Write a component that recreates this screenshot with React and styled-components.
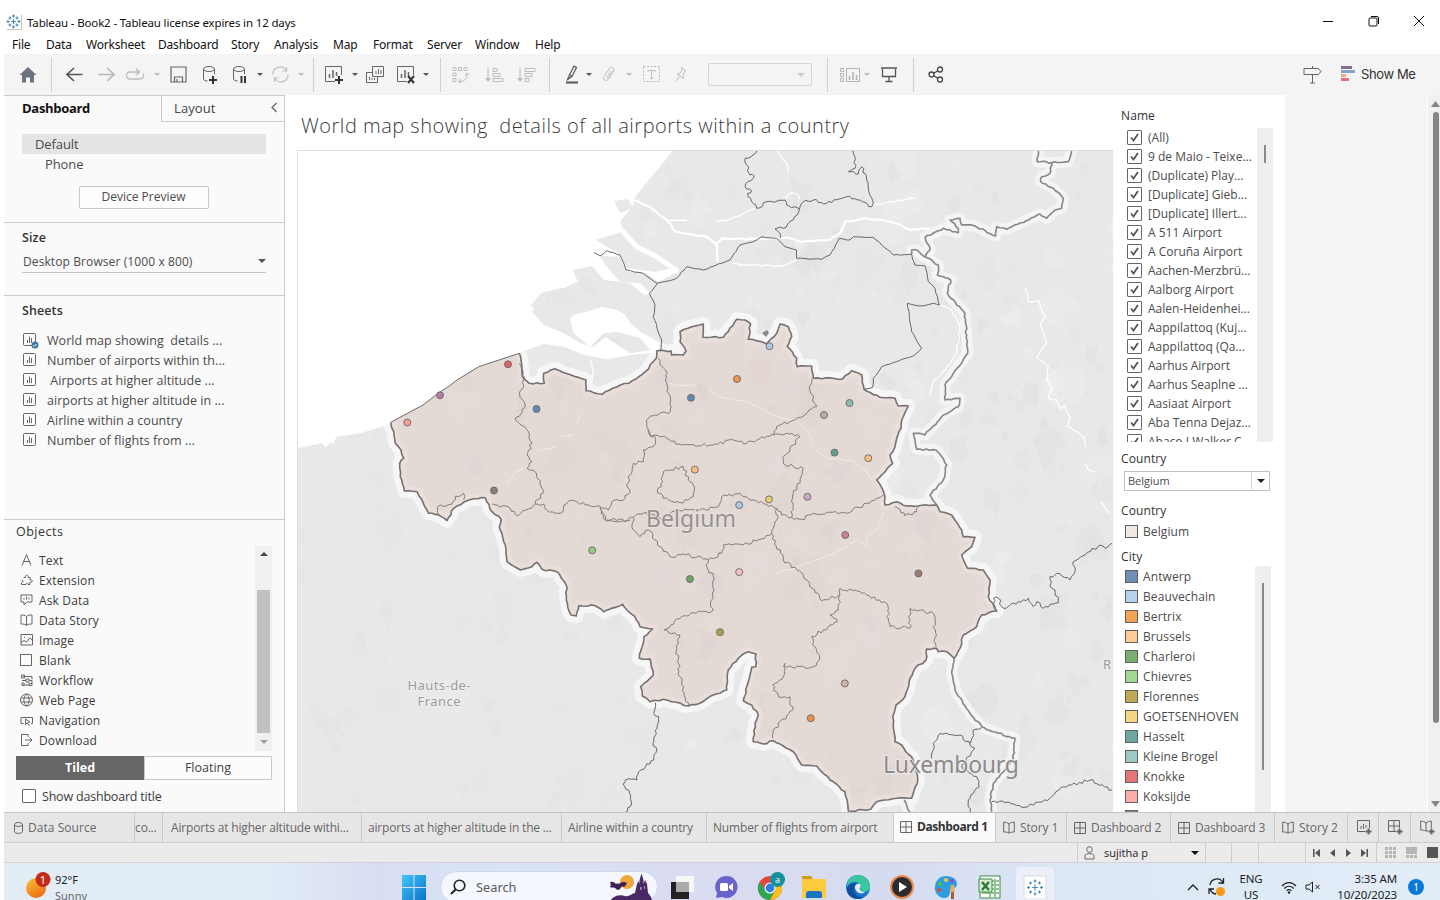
import React from "react";
import styled, { createGlobalStyle } from "styled-components";

const UI = `"Open Sans", "Noto Sans", sans-serif`;
const WIN = `"Noto Sans", "Open Sans", sans-serif`;

const GlobalStyle = createGlobalStyle`
  * { box-sizing: border-box; }
  body { margin: 0; background: #fff; font-family: ${UI}; font-size: 12px; color: #4b4b4b; overflow: hidden; }
`;

/* ---------- window frame ---------- */
const Window = styled.div`
  width: 1440px; height: 900px; padding-left: 4px; overflow: hidden;
  display: flex; flex-direction: column; background: #fff;
`;
const TitleBar = styled.header`
  flex: none; height: 34px; padding: 10px 15px 0 2px; display: flex; align-items: center;
  font-family: ${WIN}; font-size: 11.5px; color: #111;
`;
const TitleText = styled.span`margin-left: 5px; letter-spacing: -0.15px; flex: 1; white-space: pre;`;
const WindowButtons = styled.div`display: flex; gap: 33.5px; align-items: center; margin-top: -3px;`;
const MenuBar = styled.nav`
  flex: none; height: 20px; padding-left: 8px; display: flex; align-items: center;
  font-family: ${WIN}; font-size: 12px; color: #111;
`;
const MenuItem = styled.span`width: ${(p) => p.$w}px; flex: none; letter-spacing: -0.2px; white-space: nowrap;`;

/* ---------- toolbar ---------- */
const Toolbar = styled.div`flex: none; height: 41px; background: #f4f4f4; display: flex; align-items: center;`;
const Slot = styled.div`
  width: ${(p) => p.$w}px; height: 34px; flex: none; display: flex; align-items: center; justify-content: center;
  border-right: ${(p) => (p.$line ? "1px solid #cfcfcf" : "none")};
  svg { flex: none; }
`;
const Caret = styled.i`
  width: 0; height: 0; flex: none; border: ${(p) => p.$s || 3}px solid transparent; border-bottom: 0;
  border-top: ${(p) => p.$s || 3}px solid ${(p) => p.$c || "#555"};
`;
const Combo = styled.div`
  width: 104px; height: 23px; flex: none; border: 1px solid #d4d4d4; border-radius: 2px;
  display: flex; align-items: center; justify-content: flex-end; padding-right: 6px;
`;
const ShowMe = styled.div`
  display: flex; align-items: center; gap: 6px; width: 108px; height: 32px; padding: 0 0 2px 9px; font-size: 13px; color: #333;
  font-family: Inter, sans-serif; font-weight: 400; letter-spacing: -0.4px; white-space: nowrap;
`;

/* ---------- workspace ---------- */
const Workspace = styled.div`flex: none; height: 717px; display: flex;`;
const Sidebar = styled.aside`
  width: 281px; flex: none; border-right: 1px solid #cbcbcb; border-top: 1px solid #cbcbcb; background: #fafafa;
  display: flex; flex-direction: column; font-size: 13px;
`;
const PaneTabs = styled.div`height: 26px; display: flex; flex: none;`;
const PaneTab = styled.div`
  width: ${(p) => (p.$active ? 157 : 124)}px; flex: none; display: flex; align-items: center; justify-content: space-between;
  padding: 0 7px 2px ${(p) => (p.$active ? 18 : 12)}px; color: ${(p) => (p.$active ? "#111" : "#444")};
  font-weight: ${(p) => (p.$active ? 700 : 400)}; font-size: 13px; letter-spacing: ${(p) => (p.$active ? "-0.3px" : "0.1px")};
  border-left: ${(p) => (p.$active ? 0 : 1)}px solid #cbcbcb; border-bottom: ${(p) => (p.$active ? 0 : 1)}px solid #cbcbcb;
`;
const Section = styled.section`
  height: ${(p) => p.$h}px; flex: none; border-bottom: ${(p) => (p.$last ? 0 : 1)}px solid #cbcbcb;
  padding: ${(p) => p.$pad}; display: flex; flex-direction: column;
`;
const DeviceRow = styled.div`
  height: 20px; width: 244px; flex: none; background: ${(p) => (p.$on ? "#e4e4e4" : "transparent")};
  padding-left: ${(p) => (p.$on ? 13 : 23)}px; line-height: 21px; letter-spacing: -0.1px;
`;
const PreviewButton = styled.button`
  width: 130px; height: 23px; margin: 12px 0 0 57px; border: 1px solid #c9c9c9; border-radius: 2px; background: #fdfdfd;
  font: 12px ${UI}; color: #4b4b4b; padding: 0 1px 2px 0;
`;
const Heading = styled.h2`
  margin: 0; height: 20px; flex: none; line-height: 19px; font-size: 12.5px; font-weight: ${(p) => p.$wt || 600};
  color: #333; letter-spacing: ${(p) => (p.$wt ? 0.5 : 0.1)}px;
`;
const SizeSelect = styled.div`
  width: 244px; height: 23px; margin-top: 2px; border-bottom: 1px solid #c6c6c6; display: flex; align-items: center;
  justify-content: space-between; padding: 2px 0 2px 1px; font-size: 12px; letter-spacing: 0.1px;
`;
const SheetList = styled.div`margin-top: 9px; display: flex; flex-direction: column;`;
const SheetRow = styled.div`
  height: 20px; display: flex; align-items: center; gap: 10px; white-space: pre; letter-spacing: 0.04px; font-size: 12.5px;
  svg { flex: none; }
`;
const ObjectsPane = styled.div`display: flex; height: 205px; margin-top: 4px; width: 256px; overflow: hidden;`;
const ObjectList = styled.div`flex: 1; display: flex; flex-direction: column; margin-top: -16px;`;
const ObjectRow = styled.div`
  height: 20px; flex: none; display: flex; align-items: center; gap: 5px; padding-left: 4px; font-size: 12px; color: #3c3c3c;
  letter-spacing: 0.15px;
  svg { flex: none; }
`;
const ScrollTrack = styled.div`
  width: 17px; background: #f0f0f0; display: flex; flex-direction: column; align-items: center; justify-content: space-between;
  padding: 6px 0 7px;
`;
const ScrollThumb = styled.div`width: 13px; height: 143px; background: #c1c1c1; margin-top: 26px;`;
const Switcher = styled.div`display: flex; width: 256px; height: 24px; margin-top: 5px;`;
const SwitchSide = styled.div`
  flex: 1; display: flex; align-items: center; justify-content: center; font-size: 12.5px; padding-bottom: 1px;
  border: 1px solid ${(p) => (p.$on ? "#666" : "#c6c6c6")}; background: ${(p) => (p.$on ? "#666" : "#fcfcfc")};
  color: ${(p) => (p.$on ? "#fff" : "#444")}; font-weight: ${(p) => (p.$on ? 700 : 400)};
`;
const TitleToggle = styled.label`display: flex; align-items: center; gap: 6px; margin: 8px 0 0 6px; height: 16px; font-size: 12.5px; color: #3c3c3c; letter-spacing: -0.2px;`;
const EmptyBox = styled.span`width: 14px; height: 14px; border: 1px solid #666; border-radius: 1px; background: #fff;`;

const Canvas = styled.main`
  width: 1000px; flex: none; background: #fff; display: flex; padding-left: 12px; overflow: hidden;
`;
const MapPanel = styled.div`width: 816px; flex: none; display: flex; flex-direction: column;`;
const MapTitle = styled.h1`
  margin: 0; height: 55px; flex: none; padding: 14px 0 0 4px; line-height: 34px; font-size: 20px; font-weight: 350;
  color: #3c3c3c; white-space: pre; letter-spacing: 0.5px;
`;
const MapFrame = styled.div`
  height: 662px; border: 1px solid #dcdcdc; border-width: 1px 0 0 1px; overflow: hidden;
  svg { display: block; }
`;
const Filters = styled.div`width: 172px; flex: none; padding: 11px 0 0 8px; display: flex; flex-direction: column; font-size: 12px;`;
const FilterTitle = styled.h3`
  margin: 0; height: ${(p) => p.$h}px; padding-top: ${(p) => p.$top || 0}px; flex: none; font-size: 12px; font-weight: 500;
  line-height: 20px; color: #333; letter-spacing: 0.1px;
`;
const ScrollArea = styled.div`height: ${(p) => p.$h}px; width: ${(p) => p.$w}px; flex: none; display: flex; overflow: hidden;`;
const RowStack = styled.div`flex: 1; display: flex; flex-direction: column; min-width: 0;`;
const CheckRow = styled.div`
  height: 19px; flex: none; display: flex; align-items: center; gap: 6px; padding-left: 6px; white-space: pre; color: #4b4b4b;
`;
const CheckBox = styled.span`
  width: 15px; height: 15px; flex: none; border: 1px solid #666; border-radius: 1px; display: flex; align-items: center; justify-content: center;
`;
const SlimTrack = styled.div`width: 16px; flex: none; background: #efefef; display: flex; justify-content: center;`;
const SlimThumb = styled.div`width: 2px; height: ${(p) => p.$h}px; margin-top: 17px; background: #8a8a8a;`;
const CountrySelect = styled.div`
  width: 146px; height: 20px; margin-left: 3px; flex: none; border: 1px solid #c0c0c0; display: flex; font-size: 11px;
`;
const SelectText = styled.span`flex: 1; padding-left: 3px; line-height: 18px;`;
const SelectArrow = styled.span`width: 18px; border-left: 1px solid #d8d8d8; display: flex; align-items: center; justify-content: center;`;
const LegendRow = styled.div`
  height: 20px; flex: none; display: flex; align-items: center; gap: 5px; padding-left: 4px; letter-spacing: 0.1px; color: #4b4b4b;
`;
const Swatch = styled.span`width: 13px; height: 13px; flex: none; border: 1px solid #5f5f5f; background: ${(p) => p.$c};`;
const Gap = styled.div`height: ${(p) => p.$h}px; flex: none;`;
const Backdrop = styled.div`width: 143px; flex: none; background: #f4f4f4; border-right: 1px solid #fff;`;
const PageTrack = styled.div`width: 12px; flex: none; background: #f0f0f0; display: flex; flex-direction: column; align-items: flex-end; padding-top: 6px;`;
const PageThumb = styled.div`width: 6px; height: 611px; margin: 5px 1px 78px 0; border-radius: 3px; background: #858585;`;

/* ---------- sheet tabs and status ---------- */
const SheetTabs = styled.div`
  flex: none; height: 31px; background: #e6e6e6; border-top: 1px solid #c4c4c4; border-bottom: 1px solid #cdcdcd; display: flex;
  font-size: 12px; color: #666; overflow: hidden;
`;
const SheetTab = styled.div`
  width: ${(p) => p.$w}px; flex: none; border-right: 1px solid #cacaca; padding-left: ${(p) => p.$pl || 5}px; display: flex; align-items: center;
  gap: 5px; white-space: nowrap; overflow: hidden; letter-spacing: ${(p) => p.$ls || 0}px; padding-bottom: ${(p) => (p.$on ? 2 : 0)}px;
  background: ${(p) => (p.$on ? "#fafafa" : "transparent")}; color: ${(p) => (p.$on ? "#333" : "#666")};
  font-weight: ${(p) => (p.$on ? 700 : 400)};
  svg { flex: none; }
`;
const StatusBar = styled.div`flex: none; height: 20px; background: #ebebeb; border-bottom: 1px solid #d3d3d3; display: flex;`;
const StatusCell = styled.div`
  width: ${(p) => p.$w}px; flex: none; border-right: 1px solid #cdcdcd; display: flex; align-items: center; gap: ${(p) => p.$gap || 0}px;
  padding: 0 ${(p) => p.$pad || 0}px; font-size: 11px; color: #222;
`;
const ViewModes = styled.div`display: flex; align-items: center; gap: 10px; padding-left: 8px; svg { flex: none; }`;
const Push = styled.span`flex: 1;`;

/* ---------- taskbar ---------- */
const Taskbar = styled.footer`
  flex: none; height: 48px; display: flex; align-items: center; font-family: ${WIN}; color: #222; font-size: 11px;
  background: linear-gradient(90deg, #e3edf6 0, #e2ecf7 18%, #d8def2 26%, #d9e3f8 34%, #dadcf1 48%, #d5dcf0 62%, #dde8f6 75%, #e2edf8 100%);
`;
const Weather = styled.div`width: 388px; flex: none; display: flex; gap: 1px; padding-left: 21px; align-items: center;`;
const WeatherText = styled.div`line-height: 16px; padding-top: 1px; div + div { color: #666; }`;
const Search = styled.div`
  width: 218px; height: 32px; margin: 0 2px 0 4px; flex: none; border-radius: 16px; background: #f4f7fd; border: 1px solid #cfd8ea;
  display: flex; align-items: center; gap: 10px; padding: 0 4px 0 9px; font-size: 12.8px; color: #5a5a5a;
`;
const TaskSlot = styled.div`
  width: 44px; height: 42px; flex: none; display: flex; align-items: center; justify-content: center;
  ${(p) => p.$on && "width: 38px; height: 40px; margin-left: 4px; border-radius: 4px; background: #ebeffa;"}
`;
const Tray = styled.div`margin-left: auto; display: flex; align-items: center; padding-right: 5px;`;
const TrayText = styled.div`
  width: ${(p) => p.$w}px; text-align: ${(p) => p.$a}; line-height: 15.5px; font-size: 11.5px; padding-bottom: 1px; letter-spacing: -0.15px;
`;
const Notice = styled.span`
  width: 16px; height: 16px; margin: 0 11px; border-radius: 50%; background: #0a78d6; color: #fff; font-size: 10px; line-height: 16px; text-align: center;
`;

/* ---------- icons ---------- */
const Ico = ({ w = 18, h = w, c = "#666", sw = 1, children, ...rest }) => (
  <svg width={w} height={h} viewBox={`0 0 ${w} ${h}`} fill="none" stroke={c} strokeWidth={sw} {...rest}>{children}</svg>
);
const LogoMark = () => (
  <Ico w={16} c="#4a86ab" sw={1.1}>
    <path d="M15.500 1v14.500H1" stroke="#c4c4c4" strokeWidth="1" />
    <path d="M7.500 5v5M5 7.500h5M7.500 .5v3M6 2h3M7.500 11.500v3M6 13h3M.5 7.500h3M2 6v3M11.500 7.500h3M13 6v3M4 2.500v3M2.500 4h3M11 2.500v3M9.500 4h3M4 9.500v3M2.500 11h3M11 9.500v3M9.500 11h3" />
  </Ico>
);
const Home = () => <Ico w={18} viewBox="0 0 18 18"><path d="M9 1 0.500 9H3v7.500h4v-5h4v5h4V9h2.500Z" fill="#6c7480" stroke="none" /></Ico>;
const Back = ({ c, flip }) => <Ico w={17} c={c} sw={1.6}>{flip ? <path d="M.5 8.500H16M9 2l7 6.500L9 15" /> : <path d="M16.500 8.500H1M8 2 1 8.500 8 15" />}</Ico>;
const Redo = () => <Ico w={20} h={14} c="#bdbdbd" sw={1.300}><path d="M14 4H5a3.500 3.500 0 0 0 0 7h10a3.500 3.500 0 0 0 3-5.500M11 .8 14.500 4 11 7" /></Ico>;
const Save = () => <Ico w={17} c="#666" sw={1.200}><path d="M1 1h15v15H1ZM4.500 16v-5h8v5M7 16v-3" /></Ico>;
const Cylinder = ({ plus }) => (
  <Ico w={16} h={20} c="#666"><ellipse cx="7" cy="4" rx="5.500" ry="2.500" /><path d="M1.500 4v10c0 1 2 2 4 2M12.500 4v5" />
    {plus ? <path d="M7 15h8M11 11v8" stroke="#333" strokeWidth="2" /> : <path d="M9.500 11v7M13 11v7" stroke="#333" strokeWidth="2" />}
  </Ico>
);
const Refresh = () => <Ico w={19} c="#c0c0c0" sw={1.200}><path d="M2 9.500a7 7 0 0 1 13-4M17 9.500a7 7 0 0 1-13 4M15.500 2v4h-4M3.500 17v-4h4" /></Ico>;
const NewSheet = ({ x }) => (
  <Ico w={20} h={19} c="#666"><path d="M11 16.500H1.500v-15h16V10" /><path d="M5.500 13V9M9 13V5M12.500 11V7" strokeWidth="1.500" />
    {x ? <path d="m12 11 6 7M18 11l-6 7" stroke="#333" strokeWidth="2" /> : <path d="M11 15h8M15 11v8" stroke="#333" strokeWidth="2" />}
  </Ico>
);
const Duplicate = () => <Ico w={18}><path d="M6.500.5h11v10h-11ZM6.500 6.500h-6v10h11v-6M10 8V5M12.500 8V3M15 8V4M3.500 14v-3M6 14v-2M8.500 14v-2" /></Ico>;
const Swap = () => <Ico w={18} c="#bdbdbd"><path d="M1 1.500h3v3H1ZM6.500 1.500h3v3h-3ZM12 1.500h3v3h-3ZM1 7h3v3H1ZM1 12.500h3v3H1ZM7 15.500c6 0 8-3 8-8M13 9.500l2-2.500 2 2.500M9 13l-2.500 2.500L9 17.500" /></Ico>;
const Sort = ({ desc }) => (
  <Ico w={19} h={16} c="#bdbdbd"><path d="M3 0v14" /><path d="M0 11h6l-3 4Z" fill="#bdbdbd" stroke="none" />
    {desc ? <path d="M8 1.500h10v3H8ZM8 6.500h7v3H8ZM8 11.500h4v3H8Z" /> : <path d="M8 1.500h4v3H8ZM8 6.500h7v3H8ZM8 11.500h10v3H8Z" />}
  </Ico>
);
const Marker = () => <Ico w={14} h={19} c="#555" sw={1.200}><path d="M9 1 11.500 2.500 7 11.500 4.500 10ZM4.500 10 2.500 14.500 7 11.500" /><path d="M1 17.500h12" strokeWidth="2" /></Ico>;
const Clip = () => <Ico w={14} h={17} c="#bdbdbd"><path d="m12 4-6 9.500a2.500 2.500 0 0 1-4-3L7.500 2.500a2 2 0 0 1 4 2L6 13M9 5 4.500 12" /></Ico>;
const LabelT = () => <Ico w={17} c="#bdbdbd"><rect x=".5" y=".5" width="16" height="15" strokeDasharray="2 1.500" /><path d="M5 6V4.500h7V6M8.500 4.500v8M7 12.500h3" /></Ico>;
const Pin = () => <Ico w={14} h={17} c="#bdbdbd"><path d="M7.500 1.500 12 5l-1.500.5-1.500 4 .5 3L3 8l3-.5 2-4ZM5.500 10.500 1.500 15.500" /></Ico>;
const Cards = () => <Ico w={20} h={16} c="#b4b4b4"><path d="M.5 1.500h3v3h-3ZM.5 6.500h3v3h-3ZM.5 11.500h3v3h-3ZM6.500 1.500h13v13h-13Z" /><path d="M9.500 13V9M13 13V5M16.500 13V8" strokeWidth="1.600" /></Ico>;
const Present = () => <Ico w={18} h={17} c="#555"><path d="M1 2h16M2.500 3v7.500h13V3M9 10.500V15M5.500 15.500h7" strokeWidth="1.300" /></Ico>;
const Share = () => <Ico w={16} h={17} c="#444" sw={1.300}><circle cx="3.500" cy="8.500" r="2.500" /><circle cx="12" cy="3.500" r="2.500" /><circle cx="12" cy="13.500" r="2.500" /><path d="m5.800 7.300 4-2.500M5.800 9.700l4 2.500" /></Ico>;
const Signpost = () => <Ico w={19} h={19}><path d="M1 3.500h14.500l2.500 3-2.500 3H1ZM9.500 1v2.500M9.500 9.500V18M7 18h5" /></Ico>;
const ShowMeBars = () => <Ico w={14} h={15} stroke="none"><path d="M0 0h11v3H0Z" fill="#7f6f91" /><path d="M0 4h14v3H0Z" fill="#84a3c7" /><path d="M0 8h5v3H0Z" fill="#eeaa80" /><path d="M0 12h8v3H0Z" fill="#e2737d" /></Ico>;
const SheetIcon = ({ used }) => (
  <Ico w={15} h={14} style={{ overflow: "visible" }}><rect x="1.500" y=".5" width="12" height="12" rx="1" /><path d="M5.500 10V7M7.500 10V3.500M9.500 10V5" />
    {used && <><circle cx="13" cy="12" r="3.500" fill="#3d7d9e" stroke="none" /><path d="m11.500 12 1 1.200 2-2.200" stroke="#fff" /></>}
  </Ico>
);
const objectArt = {
  Text: <path d="M2 12.500 6.500 1.500 11 12.500M3.500 8.500h6" />,
  Extension: <path d="M3.500 4.500h2c-1-3 3.500-3 2.500 0h2v2.500c3-1 3 3 0 2v2.500H8c.5-2-2-2-2 0H1.500V9.500c2 0 2-2.500 0-2.500" />,
  "Ask Data": <path d="M1 2h11v7H7L4 12V9H1ZM4 6.500V5M6.500 6.500v-3M9 6.500V4.500" />,
  "Data Story": <path d="M6.500 3.500C5 2 3 2 1 2v9c2 0 4 0 5.500 1.500C8 11 10 11 12 11V2c-2 0-4 0-5.500 1.500Zm0 0v9" />,
  Image: <path d="M1 1.500h11.500V12H1ZM1 9.500l3-2 2.500 1.500 3-4 3 2M4 4.500h1" />,
  Blank: <path d="M.5 1.500h11v11h-11Z" />,
  Workflow: <path d="M3 3.500h9v3M1.500 2h3v3h-3ZM6 6h3v3H6ZM2 7.500h4M9 10.500h3v2H9ZM2 10h2v2.500H2ZM9.500 7.500h2.500v3M4 12h5" />,
  "Web Page": <path d="M6.500 1a6 6 0 1 0 0 12 6 6 0 0 0 0-12ZM6.500 1c-3.500 3.500-3.500 8.500 0 12M6.500 1c3.500 3.500 3.500 8.500 0 12M1.300 5h10.500M1.300 9h10.500" />,
  Navigation: <path d="M3.500 10.500H1v-6h11.500v6H11M5.500 6v5.500l1.500-1.500 2.500 3 M5.500 6l4.500 3-2.500.5" />,
  Download: <path d="M8 4V1.500H1.500v11H8V10M5 7h7M9.500 4.500 12 7 9.500 9.500" />,
};
const DashIcon = () => <Ico w={12} h={12}><path d="M.5.500h11v11H.5ZM6 .5v11M.5 6h11" /></Ico>;
const StoryIcon = () => <Ico w={12} h={13}><path d="M6 3C4.500 1.500 2.500 1.500.7 1v10c2 0 4 0 5.300 1.300C7.500 11 9.500 11 11.300 11V1C9.500 1.500 7.500 1.500 6 3Zm0 0v9" /></Ico>;
const DbIcon = () => <Ico w={9} h={12}><ellipse cx="4.500" cy="2.500" rx="4" ry="2" /><path d="M.5 2.500v7c0 2.500 8 2.500 8 0v-7" /></Ico>;
const Plus = <path d="M8.500 11.500h6M11.500 8.500v6" strokeWidth="2" />;
const AddSheet = () => <Ico w={15}><path d="M8 11.500H.5V.5h12V8M4 9V6M6.500 9V4M9 8V5" />{Plus}</Ico>;
const AddDash = () => <Ico w={15}><path d="M8 11.500H.5V.5h11V8M6 .5v11M.5 6h11" />{Plus}</Ico>;
const AddStory = () => <Ico w={15}><path d="M8 11H6C4 10 2 10 .7 10V1C3 1.500 4.500 1.500 6 3c1.500-1.500 3-1.500 5.300-2v7M6 3v8" />{Plus}</Ico>;

/* ---------- map geometry ---------- */
// Small deterministic generator so that coast and border detail is stable between renders.
const rng = (seed) => () => {
  seed = (seed * 1664525 + 1013904223) % 4294967296;
  return seed / 4294967296;
};
// Tile vertices are stored at three units per map pixel, relative to the tile's corner.
const tile = (ox, oy, s) => s.trim().split(" ").map((p) => { const [x, y] = p.split(",").map(Number); return [ox + x / 3, oy + y / 3]; });
const nw = (s) => tile(297, 300, s);
const ne = (s) => tile(600, 150, s);
const se = (s) => tile(600, 430, s);
const sw = (s) => tile(297, 580, s);
const roughen = (pts, amp = 1.4, step = 3.5, seed = 7) => {
  const r = rng(seed);
  const out = [pts[0]];
  for (let i = 1; i < pts.length; i++) {
    const [x0, y0] = pts[i - 1];
    const [x1, y1] = pts[i];
    const d = Math.hypot(x1 - x0, y1 - y0);
    const n = Math.max(1, Math.round(d / step));
    for (let k = 1; k <= n; k++) {
      const t = k / n;
      const j = k === n ? 0 : (r() - 0.5) * 2 * amp;
      out.push([x0 + (x1 - x0) * t - ((y1 - y0) / (d || 1)) * j, y0 + (y1 - y0) * t + ((x1 - x0) / (d || 1)) * j]);
    }
  }
  return out;
};
const line = (pts, close) => "M" + pts.map((p) => p[0].toFixed(1) + " " + p[1].toFixed(1)).join("L") + (close ? "Z" : "");

const coast = nw("281,367 378,315 430,275 457,258 480,240 545,200 667,160");
const inland = [
  ...nw("667,160 672,180 676,230 697,250 742,250 740,220 773,206 800,218 867,240 867,272 915,283 970,255 995,250 1045,215 1078,175"),
  ...ne("170,603 213,603 215,615 250,615 258,603 240,575 240,545 275,530 310,522 308,562 370,562 385,545 410,508 435,510 452,522 445,568 485,575 500,582 530,550 540,522 565,530 575,560 562,590 590,625 592,650 635,648 640,685 690,683 727,688 755,662 785,675 792,717 840,742 885,745 895,768 925,768 905,810 903,835 890,865"),
  ...se("885,50 870,75 878,100 830,150 852,190 855,225 890,215 920,228 1010,225 1020,245 1055,255 1085,300 1090,320 1125,322 1115,350 1085,375 1103,415 1150,420 1170,450 1165,500 1190,543 1145,555 1130,590 1090,615 1080,655 1062,685 1040,665 1015,665 1010,655 980,657 978,690 945,715 930,745 915,800 888,825 878,860 885,935 905,945 940,990 953,1050 935,1105 890,1105 830,1115 812,1138 745,1143 735,1085 690,1050 650,1008 605,1005 580,965 520,932 490,942 460,935 465,880 475,855 455,825 430,812 450,735 455,712 467,710 468,672 445,665 415,685 385,720 380,780 340,795 300,820 265,828 190,808 150,815 127,798 122,770 160,735 150,687 118,685 132,620 158,597 120,590 105,560 68,525"),
  ...sw("978,73 920,95 895,77 845,77 838,108 822,105 808,60 808,15"),
  ...nw("805,850 780,815 735,808 720,787 705,800 670,810 630,785 625,735 607,680 613,658 585,635 565,593 510,602 470,625 450,662 425,645 395,640 360,575 322,573 310,530 308,490 320,475 312,450 295,430 290,395 281,367"),
];
const inlandPath = roughen(inland, 0.8, 4, 11);
const belgium = line([...coast, ...inlandPath], true);
const belgiumBorder = line(inlandPath);

const provinces = [
  nw("1083,175 1110,220 1105,240 1120,290 1120,335 1075,345 1055,355 1050,370 1058,405 1075,405"),
  se("145,0 150,18 165,15 200,25 245,45 330,45 400,30 440,40 500,18 560,10 600,20 580,45 555,75 550,100 580,110 610,115 600,150 580,190 575,262 605,268 640,250 740,250 800,220 830,205 850,195"),
  se("165,20 160,50 130,60 130,95 100,100 80,165 90,180 75,205 35,215 25,240 0,232"),
  nw("1000,660 925,660 915,635 910,620 865,615 825,600 810,610 790,640 750,630 740,612 715,612 660,648 640,625 585,612"),
  nw("667,190 680,240 668,285 685,315 655,360 695,395 705,430 690,465 705,485 690,505 715,515 738,580 715,612"),
  nw("425,645 422,620 465,612 475,588 500,580 500,600"),
  ne("635,685 630,720 650,770 570,815 530,830 520,857"),
  se("190,125 250,110 265,150 280,165 280,200 240,218 190,205 172,180 188,155 190,125"),
  se("0,235 10,265 60,275 100,262 130,250 205,270 215,245 300,240 355,230 365,200 420,190 460,210 530,235 545,255 575,262"),
  se("100,262 100,300 120,320 145,300 165,330 210,380 250,372 325,390 365,370 370,345 430,345 515,312 530,270 530,235"),
  se("325,390 320,410 340,440 335,545 280,548 245,560 192,600 240,615 230,655 240,740 265,828"),
  se("515,312 550,390 610,435 665,512 720,495 715,540 690,555 712,575 635,620 658,690 640,710 560,712 555,700 550,740 518,765 535,800 570,800 578,840 520,900 518,925"),
  se("720,495 720,475 765,480 800,495 860,520 870,590 930,595 930,535 1000,550 1008,650"),
  se("885,230 915,258 950,245 955,232"),
];
const regions = [
  ne("472,0 468,8 435,25 440,45 450,75 463,78 435,110 455,122 443,130 470,175 500,155 555,150 560,165 598,178 610,155 640,150 680,160 740,140 780,150 815,170 820,160 800,90 785,50 775,72 745,65 765,55 765,20 752,0"),
  ne("598,178 580,210 550,235 525,237 540,250 540,265"),
  sw("1075,368 1070,400 1085,410 1080,445 1068,490 1080,510 1070,540 1025,575 1020,600 985,600 978,612 998,640 1000,680 985,697"),
  se("1190,543 1180,505 1195,505 1210,535 1285,505 1300,530 1310,515 1330,535 1375,518 1365,480 1350,465 1350,440 1370,430 1410,450 1425,425 1420,395 1500,345 1515,355 1536,340"),
  se("995,985 1000,940 1020,910 1080,915 1125,955 1085,1010 1130,1040 1138,1070 1105,1110 1110,1146"),
  se("1145,893 1120,900 1112,940"),
  se("1175,1115 1215,1118 1275,1132 1350,1105 1390,1070 1470,1050 1536,1080"),
];
const smoothRegions = [
  ne("-18,308 0,318 20,302 60,315 78,360 130,370 172,400 230,385 260,350 310,360 390,330 420,285 460,275 485,260 530,265 555,290 590,300 590,325 665,328 690,315 718,265 750,270 760,260 820,262 880,315 935,313 945,345 975,348 985,395 1005,415 1018,465 1000,460 960,468 922,460 935,545 965,595 940,618 845,650 820,685 818,712 795,717"),
  ne("172,400 148,430 165,465 160,500 185,570 183,603"),
];
const nations = [
  [...ne("1415,0 1405,35 1355,38 1350,70 1325,80 1322,95 1360,115 1390,145 1385,175 1365,180 1340,205 1320,192 1220,238 1190,230 1187,258 1125,228 1085,225 1080,205 1050,210 1075,235 1075,248 1030,235 975,262 990,300 975,320 1015,345 1012,375 1052,390 1042,430 1095,490 1103,610 1060,670 1035,705 1035,750 1080,745 1075,770 1030,795 975,855 940,850"), ...se("940,10 950,58 1008,60 1040,105 1030,150 990,195 1010,225")],
  ne("1315,0 1312,35 1355,38"),
  ne("935,313 935,300 950,300 975,322"),
  se("1062,685 1055,730 1070,790 1110,850 1145,890 1195,910 1245,925 1240,985 1180,1060 1170,1110 1175,1146"),
  se("912,1110 930,1146"),
];
const rivers = [
  ne("100,150 150,170 205,215 225,245 320,260 350,285 352,335"),
  ne("350,280 370,265 440,268 560,262 600,275 690,270 720,250 735,215 800,205 870,215 935,240 990,235"),
  ne("350,215 390,208 465,175"),
  ne("395,340 450,345 545,348 590,330"),
  ne("820,165 870,155 945,145"),
  ne("1275,412 1285,455 1315,452 1335,500 1320,525 1340,580 1310,620 1345,650 1340,690 1358,715 1345,745 1370,750 1380,775 1395,768 1410,800 1400,828 1450,860 1455,890"),
  ne("1020,465 1055,480 1080,530 1070,610 1030,665 1000,695 990,735"),
  ne("525,0 560,40 565,65"),
  ne("205,212 262,212"),
  ne("555,145 575,128 595,135 600,150"),
  se("1500,215 1530,250"), se("1455,100 1465,120 1485,125"),
  nw("880,180 888,210 885,245"),
];
const canals = [
  ne("325,720 360,740 440,755 545,805 590,815 625,850 640,878"),
  ne("205,700 225,706 290,706"),
  se("850,250 830,300 800,320 800,345 770,330 690,375 595,410"),
  se("645,60 685,85 760,92 800,125 815,150"),
  nw("630,555 655,515 680,505"),
  nw("840,375 845,350 855,345"),
  nw("725,455 775,440"),
  nw("785,412 830,405"),
  se("530,435 540,425 590,415"),
];
const french = nw("3,445 75,430 85,442 105,425 108,435 118,410 190,400 281,372");
const mainland = [
  [297, 812], ...french, ...coast, ...nw("675,155 740,132 800,140 860,165 930,178 1000,165 1078,158 1090,130"),
  ...ne("165,570 120,545 90,500 40,440 100,450 150,430 120,400 60,395 20,350 0,318 60,320 80,365 140,370 175,395 235,365 140,310 75,255 60,215 100,165 105,140 220,0"),
  [1114, 150], [1114, 812],
];
const islands = [
  nw("705,35 740,0 790,-30 850,-60 930,-50 1000,-20 1060,30 1075,75 1090,110 1040,100 1000,70 985,45 960,30 915,20 870,35 825,45 800,10 820,60 830,100 880,140 920,100 960,95 1030,115 1060,150 1000,160 925,110 890,140 850,130 800,100 740,75"),
  [[531, 305], [541, 293], [562, 288], [575, 299], [573, 316], [560, 325], [543, 320]],
  [[573, 270], [592, 266], [604, 280], [630, 283], [650, 300], [640, 310], [604, 300], [582, 291]],
  [[596, 240], [622, 232], [650, 252], [672, 268], [655, 272], [626, 268], [621, 255]],
  [[614, 201], [628, 199], [633, 208], [620, 213]],
];
const blobs = (() => {
  const r = rng(42);
  const list = [];
  for (let i = 0; i < 620; i++) {
    const cx = 300 + r() * 812;
    const cy = 155 + r() * 655;
    const s = 3 + r() * r() * 24;
    const n = 8 + Math.floor(r() * 7);
    const pts = [];
    for (let k = 0; k < n; k++) {
      const a = (k / n) * Math.PI * 2;
      const q = s * (0.35 + r() * 0.9);
      pts.push([cx + Math.cos(a) * q * 0.8, cy + Math.sin(a) * q]);
    }
    const quiet = cx < 680 && cy > 440 ? 0.5 : 1;
    list.push({ d: line(pts, true), o: (0.15 + r() * 0.4) * quiet, dark: r() > 0.45 });
  }
  return list;
})();
const airports = [
  [508, 364.3, "#d9656b"], [440, 395.3, "#b07fa3"], [407.3, 422.5, "#f49d99"], [536.5, 409, "#6488b3"], [494, 490.5, "#8b7d7b"],
  [691, 397.8, "#6488b3"], [737, 379, "#e9984b"], [769.5, 346.2, "#a9c8e3"], [824, 415, "#b9ada9"], [849.5, 403, "#8cbdb1"],
  [834.5, 452.6, "#5e9f97"], [868.3, 458.2, "#f4bf84"], [694.8, 469.6, "#f4bf84"], [807.4, 496.8, "#cbabc4"], [769, 499.4, "#e9cd69"],
  [739.2, 505.1, "#a9c8e3"], [845.2, 535, "#cd7f9d"], [918.5, 573.4, "#9b7e70"], [592.2, 550.3, "#94c988"], [689.9, 579, "#6ba764"],
  [739.2, 572.1, "#efc1ca"], [720, 632.2, "#b39e4b"], [844.8, 683.4, "#d2b4a9"], [810.8, 718.2, "#e9924d"],
];
const MapView = () => (
  <svg width="815" height="661" viewBox="298 151 815 661" fill="none" strokeLinejoin="round">
    <defs>
      <clipPath id="land"><path d={line(mainland, true)} />{islands.map((p, i) => <path key={i} d={line(p, true)} />)}</clipPath>
      <clipPath id="be"><path d={belgium} /></clipPath>
    </defs>
    <rect x="297" y="150" width="816" height="662" fill="#fff" />
    <g clipPath="url(#land)">
      <rect x="297" y="150" width="816" height="662" fill="#e8e8e8" />
      {blobs.map((b, i) => <path key={i} d={b.d} fill={b.dark ? "#dfdfdf" : "#eeeeee"} opacity={b.o} />)}
      {rivers.map((r, i) => <path key={i} d={line(roughen(r, 0.8, 4, i + 3))} stroke="#fff" strokeWidth={i < 2 ? 2.200 : 1.300} />)}
      <path d={line(ne("60,235 110,290 170,320 235,365"))} stroke="#fff" strokeWidth="5" />
    </g>
    <path d={belgiumBorder} stroke="#f7f7f7" strokeWidth="14" opacity=".9" clipPath="url(#land)" />
    {nations.map((n, i) => <path key={i} d={line(n)} stroke="#f4f4f4" strokeWidth="11" />)}
    <path d={belgium} fill="#e3dad6" />
    <g clipPath="url(#be)">
      {blobs.map((b, i) => <path key={i} d={b.d} fill={b.dark ? "#dacfcb" : "#e8dfdb"} opacity={b.o * 0.7} />)}
      <path d={belgiumBorder} stroke="#eadedb" strokeWidth="10" />
      {canals.map((r, i) => <path key={i} d={line(roughen(r, 0.6, 4, i + 3))} stroke="#f2ebe8" strokeWidth="1" />)}
    </g>
    {nations.map((n, i) => <path key={i} d={line(roughen(n, 0.9, 3, i + 21))} stroke="#868686" strokeWidth="1.600" />)}
    {regions.map((n, i) => <path key={i} d={line(roughen(n, 1.500, 2.800, i + 31))} stroke="#666" />)}
    {smoothRegions.map((n, i) => <path key={i} d={line(roughen(n, 0.5, 4, i + 41))} stroke="#666" />)}
    {provinces.map((n, i) => <path key={i} d={line(roughen(n, 1.700, 2.700, i + 51))} stroke="#857d7b" strokeWidth="1" />)}
    <path d={line(coast)} stroke="#6d6a69" />
    <path d={belgiumBorder} stroke="#757170" strokeWidth="1.600" />
    <path d="m762 333 5-3 2 3-3 4Z" fill="#888" />
    <g fontFamily="Noto Sans, Open Sans, sans-serif" textAnchor="middle" paintOrder="stroke" strokeWidth="2">
      <text x="691" y="527" fontSize="23" fill="#979190" stroke="#e9e2df" textLength="90">Belgium</text>
      <text x="951" y="773" fontSize="23" fill="#8c8a8a" stroke="#efecec" textLength="136">Luxembourg</text>
      <g fontSize="13" fill="#9a9a9a" stroke="#f0f0f0"><text x="439" y="690" textLength="63">Hauts-de-</text><text x="439" y="706" textLength="43">France</text><text x="1107" y="669">R</text></g>
    </g>
    {airports.map(([x, y, c], i) => <circle key={i} cx={x} cy={y} r="3.500" fill={c} stroke="#6e6663" strokeWidth=".9" />)}
  </svg>
);

/* ---------- content ---------- */
const menus = [["File", 34], ["Data", 40], ["Worksheet", 72], ["Dashboard", 73], ["Story", 43], ["Analysis", 59], ["Map", 40], ["Format", 54], ["Server", 48], ["Window", 60], ["Help", 40]];
const sheets = ["World map showing  details ...", "Number of airports within th...", " Airports at higher altitude ...", "airports at higher altitude in ...", "Airline within a country", "Number of flights from ..."];
const names = ["(All)", "9 de Maio - Teixe...", "(Duplicate) Play...", "[Duplicate] Gieb...", "[Duplicate] Illert...", "A 511 Airport", "A Coruña Airport", "Aachen-Merzbrü...", "Aalborg Airport", "Aalen-Heidenhei...", "Aappilattoq (Kuj...", "Aappilattoq (Qa...", "Aarhus Airport", "Aarhus Seaplne ...", "Aasiaat Airport", "Aba Tenna Dejaz...", "Abaco I Walker C..."];
const cities = [["Antwerp", "#6f8fb6"], ["Beauvechain", "#b4d3ee"], ["Bertrix", "#f5a252"], ["Brussels", "#ffcb94"], ["Charleroi", "#79b071"], ["Chievres", "#a1d993"], ["Florennes", "#c0aa56"], ["GOETSENHOVEN", "#f4d780"], ["Hasselt", "#6da8a3"], ["Kleine Brogel", "#9ec8c3"], ["Knokke", "#e67577"], ["Koksijde", "#ffadaa"], ["", "#938785"]];

const Tick = () => <Ico w={11} c="#555" sw={1.800}><path d="m2 5.500 2.500 3L9 2" /></Ico>;

const MainToolbar = () => (
  <Toolbar>
    <Slot $w={48} $line><Home /></Slot>
    <Slot $w={44}><Back c="#555" /></Slot>
    <Slot $w={20}><Back c="#b8b8b8" flip /></Slot>
    <Slot $w={38}><Redo /></Slot>
    <Slot $w={6}><Caret $c="#bbb" /></Slot>
    <Slot $w={36}><Save /></Slot>
    <Slot $w={27}><Cylinder plus /></Slot>
    <Slot $w={33}><Cylinder /></Slot>
    <Slot $w={8}><Caret /></Slot>
    <Slot $w={32}><Refresh /></Slot>
    <Slot $w={9}><Caret $c="#bbb" /></Slot>
    <Slot $w={9} $line />
    <Slot $w={2} />
    <Slot $w={36}><NewSheet /></Slot>
    <Slot $w={5}><Caret /></Slot>
    <Slot $w={36}><Duplicate /></Slot>
    <Slot $w={26}><NewSheet x /></Slot>
    <Slot $w={14}><Caret /></Slot>
    <Slot $w={8} $line />
    <Slot $w={40}><Swap /></Slot>
    <Slot $w={26}><Sort /></Slot>
    <Slot $w={38}><Sort desc /></Slot>
    <Slot $w={5} $line />
    <Slot $w={8} />
    <Slot $w={28}><Marker /></Slot>
    <Slot $w={6}><Caret /></Slot>
    <Slot $w={34}><Clip /></Slot>
    <Slot $w={6}><Caret $c="#bbb" /></Slot>
    <Slot $w={38}><LabelT /></Slot>
    <Slot $w={22}><Pin /></Slot>
    <Slot $w={16} />
    <Combo><Caret $s={4} $c="#ccc" /></Combo>
    <Slot $w={16} $line />
    <Slot $w={7} />
    <Slot $w={30}><Cards /></Slot>
    <Slot $w={4}><Caret $c="#bbb" /></Slot>
    <Slot $w={40}><Present /></Slot>
    <Slot $w={5} $line />
    <Slot $w={44}><Share /></Slot>
    <Push />
    <Slot $w={40}><Signpost /></Slot>
    <ShowMe><ShowMeBars />Show Me</ShowMe>
  </Toolbar>
);

const SidePane = () => (
  <Sidebar>
    <PaneTabs>
      <PaneTab $active>Dashboard</PaneTab>
      <PaneTab>Layout<Ico w={8} h={11} sw={1.300}><path d="M6.500 1 2 5.500 6.500 10" /></Ico></PaneTab>
    </PaneTabs>
    <Section $h={101} $pad="12px 18px 0">
      <DeviceRow $on>Default</DeviceRow>
      <DeviceRow>Phone</DeviceRow>
      <PreviewButton>Device Preview</PreviewButton>
    </Section>
    <Section $h={73} $pad="5px 18px 0">
      <Heading>Size</Heading>
      <SizeSelect>Desktop Browser (1000 x 800)<Caret $s={4} /></SizeSelect>
    </Section>
    <Section $h={224} $pad="5px 18px 0">
      <Heading>Sheets</Heading>
      <SheetList>{sheets.map((s, i) => <SheetRow key={s}><SheetIcon used={i === 0} />{s}</SheetRow>)}</SheetList>
    </Section>
    <Section $h={291} $pad="2px 12px 0" $last>
      <Heading $wt={500}>Objects</Heading>
      <ObjectsPane>
        <ObjectList>
          <ObjectRow><Ico w={13} h={14}><path d="M3 12.500h6v-3" /></Ico></ObjectRow>
          {Object.entries(objectArt).map(([n, art]) => <ObjectRow key={n}><Ico w={14}>{art}</Ico>{n}</ObjectRow>)}
        </ObjectList>
        <ScrollTrack>
          <Ico w={8} h={4} stroke="none"><path d="M0 4 4 0l4 4Z" fill="#444" /></Ico>
          <ScrollThumb />
          <Caret $s={4} $c="#999" />
        </ScrollTrack>
      </ObjectsPane>
      <Switcher><SwitchSide $on>Tiled</SwitchSide><SwitchSide>Floating</SwitchSide></Switcher>
      <TitleToggle><EmptyBox />Show dashboard title</TitleToggle>
    </Section>
  </Sidebar>
);

const FilterPane = () => (
  <Filters>
    <FilterTitle $h={22}>Name</FilterTitle>
    <ScrollArea $h={314} $w={152}>
      <RowStack>{names.map((n) => <CheckRow key={n}><CheckBox><Tick /></CheckBox>{n}</CheckRow>)}</RowStack>
      <SlimTrack><SlimThumb $h={18} /></SlimTrack>
    </ScrollArea>
    <FilterTitle $h={29} $top={7}>Country</FilterTitle>
    <CountrySelect><SelectText>Belgium</SelectText><SelectArrow><Caret $s={4} $c="#222" /></SelectArrow></CountrySelect>
    <Gap $h={10} />
    <FilterTitle $h={20}>Country</FilterTitle>
    <LegendRow><Swatch $c="#f2e9e6" />Belgium</LegendRow>
    <Gap $h={6} />
    <FilterTitle $h={19}>City</FilterTitle>
    <ScrollArea $h={246} $w={150}>
      <RowStack>{cities.map(([n, c]) => <LegendRow key={c}><Swatch $c={c} />{n}</LegendRow>)}</RowStack>
      <SlimTrack><SlimThumb $h={187} /></SlimTrack>
    </ScrollArea>
  </Filters>
);

const BottomTabs = () => (
  <SheetTabs>
    <SheetTab $w={131} $pl={10} $ls={0.05}><DbIcon />Data Source</SheetTab>
    <SheetTab $w={28} $pl={0.1} $ls={-0.2}>co...</SheetTab>
    <SheetTab $w={199} $pl={8} $ls={-0.16}>Airports at higher altitude withi...</SheetTab>
    <SheetTab $w={200} $pl={6} $ls={-0.18}>airports at higher altitude in the ...</SheetTab>
    <SheetTab $w={145} $pl={6} $ls={-0.17}>Airline within a country</SheetTab>
    <SheetTab $w={187} $pl={6} $ls={-0.18}>Number of flights from airport</SheetTab>
    <SheetTab $w={102} $pl={6} $ls={-0.42} $on><DashIcon />Dashboard 1</SheetTab>
    <SheetTab $w={71} $pl={7} $ls={-0.12}><StoryIcon />Story 1</SheetTab>
    <SheetTab $w={104} $pl={7} $ls={-0.16}><DashIcon />Dashboard 2</SheetTab>
    <SheetTab $w={104} $pl={7} $ls={-0.16}><DashIcon />Dashboard 3</SheetTab>
    <SheetTab $w={73} $pl={7}><StoryIcon />Story 2</SheetTab>
    <SheetTab $w={31} $pl={9}><AddSheet /></SheetTab>
    <SheetTab $w={32} $pl={9}><AddDash /></SheetTab>
    <SheetTab $w={32} $pl={9}><AddStory /></SheetTab>
  </SheetTabs>
);

const Status = () => (
  <StatusBar>
    <StatusCell $w={1074} />
    <StatusCell $w={128} $pad={6} $gap={9}>
      <Ico w={11} h={14}><circle cx="5.500" cy="3.500" r="2.800" /><path d="M1 13V9.500C1 7 10 7 10 9.500V13Z" /></Ico>sujitha p<Push /><Caret $s={4} $c="#111" />
    </StatusCell>
    <StatusCell $w={26} /><StatusCell $w={27} /><StatusCell $w={47} />
    <StatusCell $w={71} $pad={7} $gap={9}>
      <Ico w={7} h={8} stroke="none"><path d="M0 0h1.500v8H0ZM7 0v8L2 4Z" fill="#555" /></Ico>
      <Ico w={7} h={8} stroke="none"><path d="M6 0v8L1 4Z" fill="#555" /></Ico>
      <Ico w={7} h={8} stroke="none"><path d="M1 0v8l5-4Z" fill="#555" /></Ico>
      <Ico w={7} h={8} stroke="none"><path d="M0 0v8l5-4ZM5.500 0H7v8H5.500Z" fill="#555" /></Ico>
    </StatusCell>
    <ViewModes>
      <Ico w={11} stroke="none"><path d="M0 0h3v3H0ZM4 0h3v3H4ZM8 0h3v3H8ZM0 4h3v3H0ZM4 4h3v3H4ZM8 4h3v3H8ZM0 8h3v3H0ZM4 8h3v3H4ZM8 8h3v3H8Z" fill="#b5b5b5" /></Ico>
      <Ico w={11} stroke="none"><path d="M0 0h11v7H0ZM0 8h3v3H0ZM4 8h3v3H4ZM8 8h3v3H8Z" fill="#b5b5b5" /></Ico>
      <Ico w={11} stroke="none"><path d="M0 0h11v11H0Z" fill="#555" /></Ico>
    </ViewModes>
  </StatusBar>
);

const TaskIcons = () => (
  <>
    <TaskSlot><Ico w={24} h={24} stroke="none"><rect x="1" y="7" width="18" height="17" fill="#222" /><rect x="6" y="1" width="18" height="16" fill="#f7f7f7" /><path d="M6 7h13v10H6Z" fill="#aaa" /></Ico></TaskSlot>
    <TaskSlot><Ico w={24} h={24} stroke="none"><path d="M12 1a11 11 0 1 1-4 21l-6 1 1-5A11 11 0 0 1 12 1Z" fill="#6a63cc" /><rect x="6" y="8" width="8" height="8" rx="1.500" fill="#fff" /><path d="m15 11 4-3v8l-4-3Z" fill="#fff" /></Ico></TaskSlot>
    <TaskSlot>
      <Ico w={30} h={30} stroke="none"><circle cx="15" cy="16" r="12" fill="#e8453c" /><path d="M4.600 10A12 12 0 0 0 15 28l5-9-9-1Z" fill="#30a552" /><path d="M15 28a12 12 0 0 0 11-17H15l5 8Z" fill="#fbc116" /><circle cx="15" cy="16" r="5.500" fill="#fff" /><circle cx="15" cy="16" r="4.400" fill="#2f7de9" /><circle cx="22.500" cy="7.500" r="7.500" fill="#14919b" /><text x="22.500" y="10.500" fontSize="9" fill="#fff" textAnchor="middle" fontFamily="Open Sans">a</text></Ico>
    </TaskSlot>
    <TaskSlot><Ico w={24} h={24} stroke="none"><path d="M0 1h9l2 3H0Z" fill="#d29b16" /><path d="M0 4h24v19H0Z" fill="#fccb3f" /><path d="M4 23v-4c0-2 1-3 3-3h10c2 0 3 1 3 3v4Z" fill="#1a74c4" /></Ico></TaskSlot>
    <TaskSlot>
      <Ico w={24} h={24} stroke="none"><circle cx="12" cy="12" r="12" fill="#1673c9" /><path d="M1 9C3 2 8 0 12 0c8 0 12 6 12 11 0 4-3 6-6 6-3 0-4-1-4-2 0-1 1-1 1-3 0-3-3-5-6-5-4 0-7 2-8 5Z" fill="#3cc7a0" /><path d="M8 14c0 6 5 9 10 8-9 5-18-1-17-9 2-4 7-6 11-4-3 0-4 3-4 5Z" fill="#0f4f9e" /><path d="M9 12c0-3 3-4 5-3 1 1 1 3 0 4-1 2 1 4 5 4-3 3-10 1-10-5Z" fill="#e3eefb" /></Ico>
    </TaskSlot>
    <TaskSlot><Ico w={24} h={24} stroke="none"><circle cx="12" cy="12" r="12" fill="#e88a4e" /><circle cx="12" cy="12" r="10" fill="#2b2b30" /><path d="m9 7 8 5-8 5Z" fill="#fff" /></Ico></TaskSlot>
    <TaskSlot><Ico w={24} h={24} stroke="none"><path d="M12 1c7 0 11 4 11 8 0 6-7 3-7 7 0 3-1 7-5 7C4 23 0 17 1 11 2 5 6 1 12 1Z" fill="#2d9fe0" /><circle cx="6" cy="9" r="2" fill="#5bbf4a" /><circle cx="12" cy="5" r="2" fill="#f8c23c" /><circle cx="5" cy="15" r="2" fill="#e2463f" /><circle cx="18" cy="6" r="2" fill="#8d4fd0" /><path d="M17 10h3l1 7h-5Z" fill="#e5b066" /><path d="M17 17h3v7h-3Z" fill="#a35f2c" /></Ico></TaskSlot>
    <TaskSlot><Ico w={24} h={24} c="#3d8b46"><rect x="2" y="1" width="20" height="22" fill="#fff" /><path d="M12 6h9M12 10h9M12 14h9M4 18h17M12 18v4M17 4v18" stroke="#8fc48f" strokeWidth="2" /><path d="M1 4h13v13H1Z" fill="#d9ecd5" /><path d="m4 7 7 8M11 7l-7 8" stroke="#2c7a38" strokeWidth="2.500" /></Ico></TaskSlot>
    <TaskSlot $on><Ico w={24} h={24} stroke="none"><rect x="1" y="1" width="22" height="23" fill="#fff" stroke="#d9d9d9" /><g transform="translate(3.500 4)" stroke="#4f8db5"><path d="M8.500 5.500v6M5.500 8.500h6M8.500 .5v3M7 2h3M8.500 13.500v3M7 15h3M.5 8.500h3M2 7v3M13.500 8.500h3M15 7v3M4 2.500v3M2.500 4h3M13 2.500v3M11.500 4h3M4 11.500v3M2.500 13h3M13 11.500v3M11.500 13h3" strokeWidth="1.200" /></g></Ico></TaskSlot>
  </>
);

const BottomBar = () => (
  <Taskbar>
    <Weather>
      <Ico w={29} h={30} stroke="none"><defs><linearGradient id="sun" x1="0" y1="0" x2=".6" y2="1"><stop stopColor="#f9c13a" /><stop offset="1" stopColor="#ee6f14" /></linearGradient></defs><circle cx="11" cy="16" r="10" fill="url(#sun)" /><circle cx="18" cy="7.500" r="7.500" fill="#c42b1c" /><text x="18" y="11.500" fontSize="11" fill="#fff" textAnchor="middle">1</text></Ico>
      <WeatherText><div>92°F</div><div>Sunny</div></WeatherText>
    </Weather>
    <TaskSlot><Ico w={24} h={25} stroke="none"><defs><linearGradient id="win" x1="0" y1="0" x2="1" y2="1"><stop stopColor="#45c6f7" /><stop offset="1" stopColor="#0873c9" /></linearGradient></defs><path d="M0 0h11.500v12H0ZM12.500 0H24v12H12.500ZM0 13h11.500v12H0ZM12.500 13H24v12H12.500Z" fill="url(#win)" /></Ico></TaskSlot>
    <Search>
      <Ico w={16} c="#222" sw={1.600}><circle cx="9.500" cy="6.500" r="5.300" /><path d="M5.500 10.500 1 15" strokeWidth="2" /></Ico>Search<Push />
      <Ico w={44} h={28} stroke="none">
        <circle cx="18" cy="9" r="7" fill="#f0a83c" />
        <path d="M1 9c3-1 5 1 6 2 1-1 2-1 3 0 2-2 5-3 8-1-1 1-1 3-3 4-2-1-3 0-4 2-2 2-4 0-5-1-2-1-4 0-5-1 1-2 1-3 0-5Z" fill="#3d2152" />
        <path d="M1 28c3-4 8-7 15-5 4 1 6-2 10-3l2-9 1.500-3 1 3V7L32.500.5 34.500 7v4l1.500-4 2 4 1 9c2 2 4 5 4 8Z" fill="#4a2765" />
        <path d="M31 14h1.500v3H31ZM35 13h1v3h-1Z" fill="#b58ac0" />
      </Ico>
    </Search>
    <TaskIcons />
    <Tray>
      <Slot $w={24}><Ico w={12} h={8} c="#222" sw={1.300}><path d="m1 7 5-5 5 5" /></Ico></Slot>
      <Slot $w={24}><Ico w={18} h={20} c="#222" sw={1.300}><path d="M2 8a7 7 0 0 1 13-2.500M15.500 1v5h-5M8 17a7 7 0 0 1-6-5M1 17v-5h5" /><circle cx="12.500" cy="14.500" r="4.500" fill="#f59a17" stroke="none" /></Ico></Slot>
      <TrayText $w={44} $a="center">ENG<br />US</TrayText>
      <Slot $w={32}><Ico w={16} h={13} c="#222" sw={1.200}><path d="M1 5c4-4.500 10-4.500 14 0M3.200 7.500c3-3 6.600-3 9.600 0M5.500 9.800c1.500-1.500 3.500-1.500 5 0" /><circle cx="8" cy="11.500" r="1.200" fill="#222" stroke="none" /></Ico></Slot>
      <Slot $w={16}><Ico w={16} h={12} c="#222"><path d="M1 4h3l3.500-3v10L4 8H1ZM10.500 4l4 4M14.500 4l-4 4" /></Ico></Slot>
      <TrayText $w={76} $a="right">3:35 AM<br />10/20/2023</TrayText>
      <Notice>1</Notice>
    </Tray>
  </Taskbar>
);

export default function App() {
  return (
    <Window>
      <GlobalStyle />
      <TitleBar>
        <LogoMark />
        <TitleText>Tableau - Book2 - Tableau license expires in 12 days</TitleText>
        <WindowButtons>
          <Ico w={12} c="#111"><path d="M1 6.500h10" /></Ico>
          <Ico w={12} c="#111"><rect x="1" y="3" width="8" height="8" rx="1" /><path d="M3 1.500h6a1.500 1.500 0 0 1 1.500 1.500v6" /></Ico>
          <Ico w={12} c="#111"><path d="m1 1 10 10M11 1 1 11" /></Ico>
        </WindowButtons>
      </TitleBar>
      <MenuBar>{menus.map(([m, w]) => <MenuItem key={m} $w={w}>{m}</MenuItem>)}</MenuBar>
      <MainToolbar />
      <Workspace>
        <SidePane />
        <Canvas>
          <MapPanel>
            <MapTitle>{"World map showing  details of all airports within a country"}</MapTitle>
            <MapFrame><MapView /></MapFrame>
          </MapPanel>
          <FilterPane />
        </Canvas>
        <Backdrop />
        <PageTrack>
          <Ico w={9} h={6} stroke="none"><path d="M0 6 4.500 0 9 6Z" fill="#858585" /></Ico>
          <PageThumb />
          <Ico w={9} h={6} stroke="none"><path d="m0 0 4.500 6L9 0Z" fill="#858585" /></Ico>
        </PageTrack>
      </Workspace>
      <BottomTabs />
      <Status />
      <BottomBar />
    </Window>
  );
}
